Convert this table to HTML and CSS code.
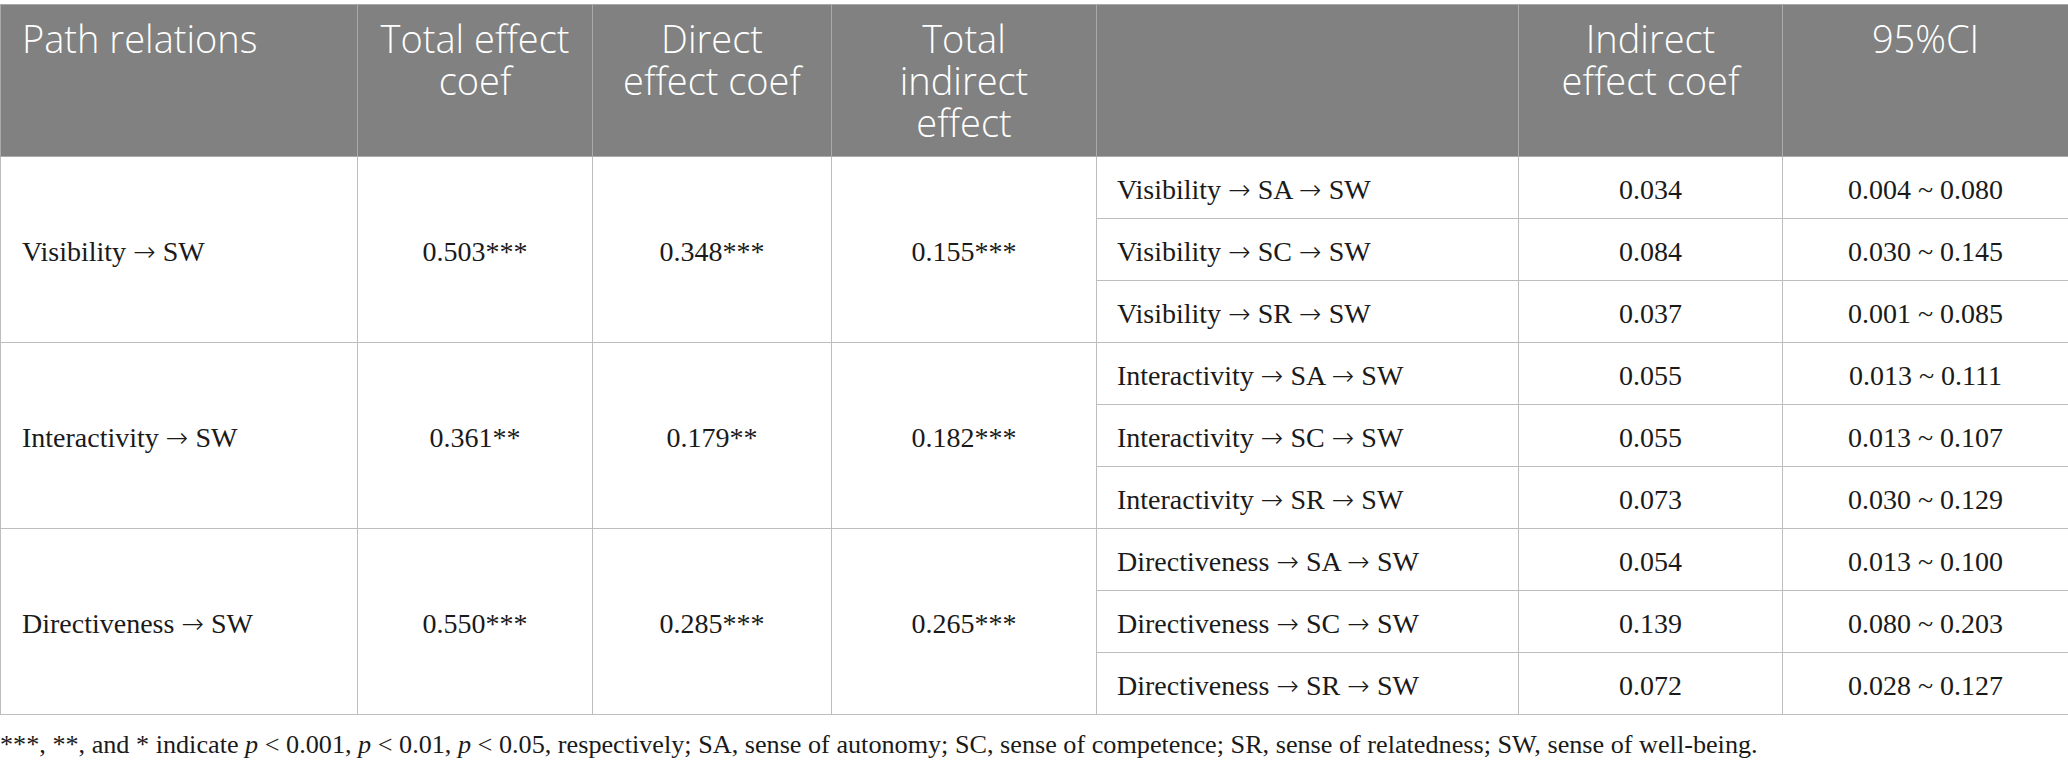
FILE: index.html
```html
<!DOCTYPE html>
<html lang="en">
<head>
<meta charset="utf-8">
<title>Path relations</title>
<link rel="stylesheet" href="styles.css">
</head>
<body>
<table class="tbl">
  <colgroup>
    <col class="c1"><col class="c2"><col class="c3"><col class="c4"><col class="c5"><col class="c6"><col class="c7">
  </colgroup>
  <thead>
    <tr class="head-row">
      <th class="left">Path relations</th>
      <th>Total effect<br>coef</th>
      <th>Direct<br>effect coef</th>
      <th>Total<br>indirect<br>effect</th>
      <th></th>
      <th>Indirect<br>effect coef</th>
      <th>95%CI</th>
    </tr>
  </thead>
  <tbody>
    <tr class="sub-row">
      <td class="left" rowspan="3">Visibility <span class="arr">→</span> SW</td>
      <td rowspan="3">0.503***</td>
      <td rowspan="3">0.348***</td>
      <td rowspan="3">0.155***</td>
      <td class="path">Visibility <span class="arr">→</span> SA <span class="arr">→</span> SW</td>
      <td>0.034</td>
      <td>0.004 ~ 0.080</td>
    </tr>
    <tr class="sub-row">
      <td class="path">Visibility <span class="arr">→</span> SC <span class="arr">→</span> SW</td>
      <td>0.084</td>
      <td>0.030 ~ 0.145</td>
    </tr>
    <tr class="sub-row">
      <td class="path">Visibility <span class="arr">→</span> SR <span class="arr">→</span> SW</td>
      <td>0.037</td>
      <td>0.001 ~ 0.085</td>
    </tr>
    <tr class="sub-row">
      <td class="left" rowspan="3">Interactivity <span class="arr">→</span> SW</td>
      <td rowspan="3">0.361**</td>
      <td rowspan="3">0.179**</td>
      <td rowspan="3">0.182***</td>
      <td class="path">Interactivity <span class="arr">→</span> SA <span class="arr">→</span> SW</td>
      <td>0.055</td>
      <td>0.013 ~ 0.111</td>
    </tr>
    <tr class="sub-row">
      <td class="path">Interactivity <span class="arr">→</span> SC <span class="arr">→</span> SW</td>
      <td>0.055</td>
      <td>0.013 ~ 0.107</td>
    </tr>
    <tr class="sub-row">
      <td class="path">Interactivity <span class="arr">→</span> SR <span class="arr">→</span> SW</td>
      <td>0.073</td>
      <td>0.030 ~ 0.129</td>
    </tr>
    <tr class="sub-row">
      <td class="left" rowspan="3">Directiveness <span class="arr">→</span> SW</td>
      <td rowspan="3">0.550***</td>
      <td rowspan="3">0.285***</td>
      <td rowspan="3">0.265***</td>
      <td class="path">Directiveness <span class="arr">→</span> SA <span class="arr">→</span> SW</td>
      <td>0.054</td>
      <td>0.013 ~ 0.100</td>
    </tr>
    <tr class="sub-row">
      <td class="path">Directiveness <span class="arr">→</span> SC <span class="arr">→</span> SW</td>
      <td>0.139</td>
      <td>0.080 ~ 0.203</td>
    </tr>
    <tr class="sub-row">
      <td class="path">Directiveness <span class="arr">→</span> SR <span class="arr">→</span> SW</td>
      <td>0.072</td>
      <td>0.028 ~ 0.127</td>
    </tr>
  </tbody>
</table>
<p class="note">***, **, and * indicate <i>p</i> &lt; 0.001, <i>p</i> &lt; 0.01, <i>p</i> &lt; 0.05, respectively; SA, sense of autonomy; SC, sense of competence; SR, sense of relatedness; SW, sense of well-being.</p>
</body>
</html>
```

FILE: styles.css
```css
html, body {
  margin: 0;
  padding: 0;
  background: #ffffff;
}

body {
  padding-top: 4px;
}

.tbl {
  width: 2068px;
  table-layout: fixed;
  border-collapse: collapse;
  font-family: "Liberation Serif", "Times New Roman", serif;
  font-size: 28px;
  color: #1a1a1a;
}

.c1 { width: 357px; }
.c2 { width: 235px; }
.c3 { width: 239px; }
.c4 { width: 265px; }
.c5 { width: 422px; }
.c6 { width: 264px; }
.c7 { width: 286px; }

.tbl th {
  background: #808180;
  color: #ffffff;
  font-family: "Open Sans", "Noto Sans", sans-serif;
  font-weight: 300;
  font-size: 38px;
  line-height: 42px;
  text-align: center;
  vertical-align: top;
  padding: 12px 8px 0;
  border: 1px solid #a9aaa9;
}

.tbl th.left {
  text-align: left;
  padding-left: 21px;
}

.head-row {
  height: 152px;
}

.sub-row {
  height: 62px;
}

.tbl td {
  border: 1px solid #bdbdbd;
  text-align: center;
  vertical-align: middle;
  padding: 5px 10px 0;
  line-height: 32px;
}

.tbl td.left {
  text-align: left;
  padding-left: 21px;
}

.tbl td.path {
  text-align: left;
  padding-left: 20px;
}

.arr {
  font-family: "DejaVu Sans", sans-serif;
  font-weight: 200;
  font-size: 27px;
}

.note {
  margin: 15px 0 0;
  font-family: "Liberation Serif", "Times New Roman", serif;
  font-size: 26.2px;
  line-height: 30px;
  color: #1a1a1a;
  white-space: nowrap;
}
```
